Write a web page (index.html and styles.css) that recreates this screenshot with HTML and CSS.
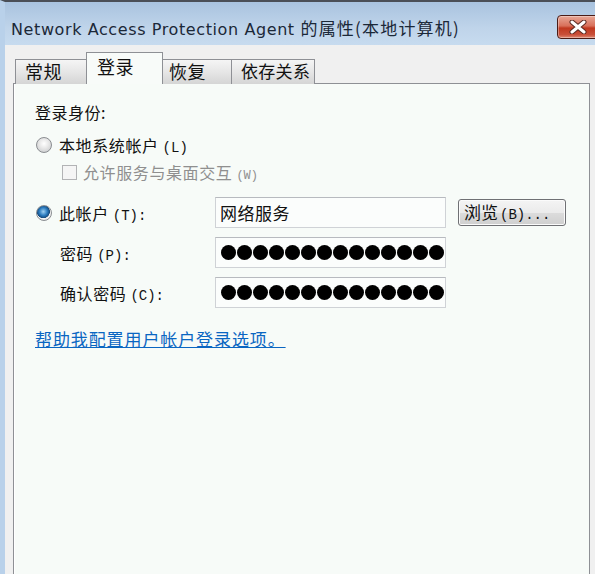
FILE: index.html
```html
<!DOCTYPE html>
<html lang="zh-CN">
<head>
<meta charset="utf-8">
<title>Network Access Protection Agent 的属性(本地计算机)</title>
<link rel="stylesheet" href="styles.css">
</head>
<body>
<div class="frame">
  <div class="titlebar">
    <span class="title">Network Access Protection Agent <span class="cjk">的属性(本地计算机)</span></span>
    <div class="close">
      <svg width="18" height="14" viewBox="0 0 18 14">
        <path d="M3 2 L15 12 M15 2 L3 12" stroke="#5a2a22" stroke-width="5" stroke-linecap="round"/>
        <path d="M3 2 L15 12 M15 2 L3 12" stroke="#ffffff" stroke-width="3" stroke-linecap="round"/>
      </svg>
    </div>
  </div>
  <div class="client">
    <div class="tabs">
      <div class="tab t1">常规</div>
      <div class="tab sel t2">登录</div>
      <div class="tab t3">恢复</div>
      <div class="tab t4">依存关系</div>
    </div>
    <div class="panel">
      <div class="heading">登录身份:</div>
      <div class="row r-local">
        <span class="radio"></span>
        <span class="lbl">本地系统帐户<span class="key">(L)</span></span>
      </div>
      <div class="row r-check disabled">
        <span class="check"></span>
        <span class="lbl">允许服务与桌面交互<span class="key small">(W)</span></span>
      </div>
      <div class="account">
        <div class="alabel">
          <span class="radio on"></span>
          <span class="lbl">此帐户<span class="key">(T):</span></span>
        </div>
        <div class="field"><span class="val">网络服务</span></div>
        <div class="btn">浏览<span class="key">(B)...</span></div>

        <div class="alabel indent"><span class="lbl">密码<span class="key">(P):</span></span></div>
        <div class="field pw">
          <span class="dot"></span><span class="dot"></span><span class="dot"></span><span class="dot"></span><span class="dot"></span><span class="dot"></span><span class="dot"></span><span class="dot"></span><span class="dot"></span><span class="dot"></span><span class="dot"></span><span class="dot"></span><span class="dot"></span><span class="dot"></span><span class="dot"></span>
        </div>
        <div></div>

        <div class="alabel indent"><span class="lbl">确认密码<span class="key">(C):</span></span></div>
        <div class="field pw">
          <span class="dot"></span><span class="dot"></span><span class="dot"></span><span class="dot"></span><span class="dot"></span><span class="dot"></span><span class="dot"></span><span class="dot"></span><span class="dot"></span><span class="dot"></span><span class="dot"></span><span class="dot"></span><span class="dot"></span><span class="dot"></span><span class="dot"></span>
        </div>
        <div></div>
      </div>
      <a class="link" href="#">帮助我配置用户帐户登录选项。</a>
    </div>
  </div>
</div>
</body>
</html>
```

FILE: styles.css
```css
html, body {
  margin: 0;
  padding: 0;
}
body {
  width: 595px;
  height: 574px;
  overflow: hidden;
  background: #f0f0f0;
  font-family: "Noto Sans CJK SC", "Noto Sans", sans-serif;
  color: #111;
}
.frame {
  height: 574px;
  border-top: 2px solid #4a4f57;
  border-left: 5px solid #b9d1ea;
  box-sizing: border-box;
  display: flex;
  flex-direction: column;
}
.titlebar {
  height: 43px;
  flex: none;
  display: flex;
  align-items: center;
  background: linear-gradient(#a9c3df, #bfd4ea 60%, #c7dbef);
  position: relative;
}
.title {
  font-family: "DejaVu Sans", "Noto Sans CJK SC", sans-serif;
  font-size: 16px;
  color: #1b2838;
  margin-left: 6px;
  padding-top: 7px;
  white-space: nowrap;
  letter-spacing: 0.6px;
}
.title .cjk {
  font-family: "Noto Sans CJK SC", sans-serif;
  font-size: 17px;
  letter-spacing: 1.2px;
}
.close {
  position: absolute;
  left: 552px;
  top: 13px;
  width: 50px;
  height: 24px;
  box-sizing: border-box;
  border: 1px solid #4b1c16;
  border-radius: 4px;
  background: linear-gradient(#e8a796, #d8705a 45%, #c0381f 55%, #c9503a 85%, #df8a74);
  box-shadow: inset 0 0 0 1px rgba(255,255,255,0.35);
  display: flex;
  align-items: center;
  padding-left: 11px;
}
.client {
  flex: 1;
  background: #f0f0f0;
  padding: 8px 5px 0 8px;
  display: flex;
  flex-direction: column;
}
.tabs {
  display: flex;
  align-items: flex-end;
  padding-left: 2px;
  height: 31px;
  margin-bottom: -1px;
  position: relative;
  z-index: 1;
}
.tab {
  height: 25px;
  box-sizing: border-box;
  border: 1px solid #8e9095;
  border-bottom: none;
  background: linear-gradient(#f5f5f5, #e6e6e6 50%, #d5d5d5);
  font-size: 18px;
  line-height: 22px;
  padding-left: 9px;
  color: #111;
  margin-left: -1px;
  letter-spacing: 0.5px;
}
.tab.t1 { width: 72px; margin-left: 0; }
.tab.t2 { width: 77px; }
.tab.t3 { width: 70px; padding-left: 6px; }
.tab.t4 { width: 84px; padding-left: 9px; font-size: 17px; letter-spacing: 0.3px; }
.tab.sel {
  height: 32px;
  background: #f8fbf9;
  border-color: #8e9095;
  padding-left: 10px;
  line-height: 22px;
  padding-top: 2px;
  position: relative;
  z-index: 2;
}
.panel {
  flex: 1;
  border: 1px solid #8e9095;
  border-bottom: none;
  background: #f7fbf8;
  padding: 17px 0 0 21px;
  box-shadow: inset 1px 0 0 #ffffff;
  font-size: 16px;
}
.heading {
  line-height: 22px;
  letter-spacing: 0.5px;
}
.row {
  display: flex;
  align-items: center;
  height: 22px;
}
.r-local { margin-top: 11px; }
.r-check { margin-top: 5px; padding-left: 27px; }
.lbl {
  letter-spacing: 0.6px;
  white-space: nowrap;
}
.key {
  font-family: "Liberation Mono", monospace;
  font-size: 14px;
  margin-left: 4px;
  letter-spacing: 0;
}
.key.small { font-size: 12px; }
.disabled { color: #8f8f8f; }
.radio {
  width: 16px;
  height: 16px;
  box-sizing: border-box;
  border-radius: 50%;
  border: 1px solid #8a8d91;
  background: radial-gradient(circle at 50% 40%, #ffffff 0, #e6e6e6 45%, #c2c4c6 100%);
  margin-left: 1px;
  margin-right: 7px;
  flex: none;
  position: relative;
}
.radio.on {
  background: radial-gradient(circle at 45% 40%, #9fd0f2 0, #2a7bbf 35%, #164b7e 55%, #f4f4f4 60%, #d2d4d6 100%);
}
.check {
  width: 15px;
  height: 15px;
  box-sizing: border-box;
  border: 1px solid #b2b3b5;
  background: #f5f5f5;
  margin-right: 6px;
  flex: none;
}
.account {
  margin-top: 14px;
  display: grid;
  grid-template-columns: 168px 231px 108px;
  grid-template-rows: 31px 31px 31px;
  column-gap: 12px;
  row-gap: 9px;
  align-items: center;
}
.alabel {
  display: flex;
  align-items: center;
}
.alabel.indent { padding-left: 25px; }
.field {
  height: 31px;
  box-sizing: border-box;
  border: 1px solid #cfd2d6;
  border-top-color: #b7babf;
  background: #fbfdfc;
  display: flex;
  align-items: center;
  overflow: hidden;
}
.val {
  font-size: 17px;
  margin-left: 4px;
  letter-spacing: 0.5px;
}
.pw {
  padding-left: 5px;
  gap: 1px;
}
.dot {
  width: 15px;
  height: 15px;
  border-radius: 50%;
  background: #000;
  flex: none;
}
.btn {
  height: 27px;
  box-sizing: border-box;
  border: 1px solid #6f7074;
  border-radius: 3px;
  background: linear-gradient(#f4f4f4, #ebebeb 50%, #dcdcdc 52%, #cfcfcf);
  box-shadow: inset 0 0 0 1px #fbfbfb;
  font-size: 17px;
  line-height: 24px;
  padding-left: 5px;
  white-space: nowrap;
}
.btn .key { margin-left: 2px; }
.link {
  display: inline-block;
  margin-top: 20px;
  font-size: 17px;
  letter-spacing: 0.9px;
  color: #0a66c2;
  text-decoration: underline;
  line-height: 22px;
}
```
